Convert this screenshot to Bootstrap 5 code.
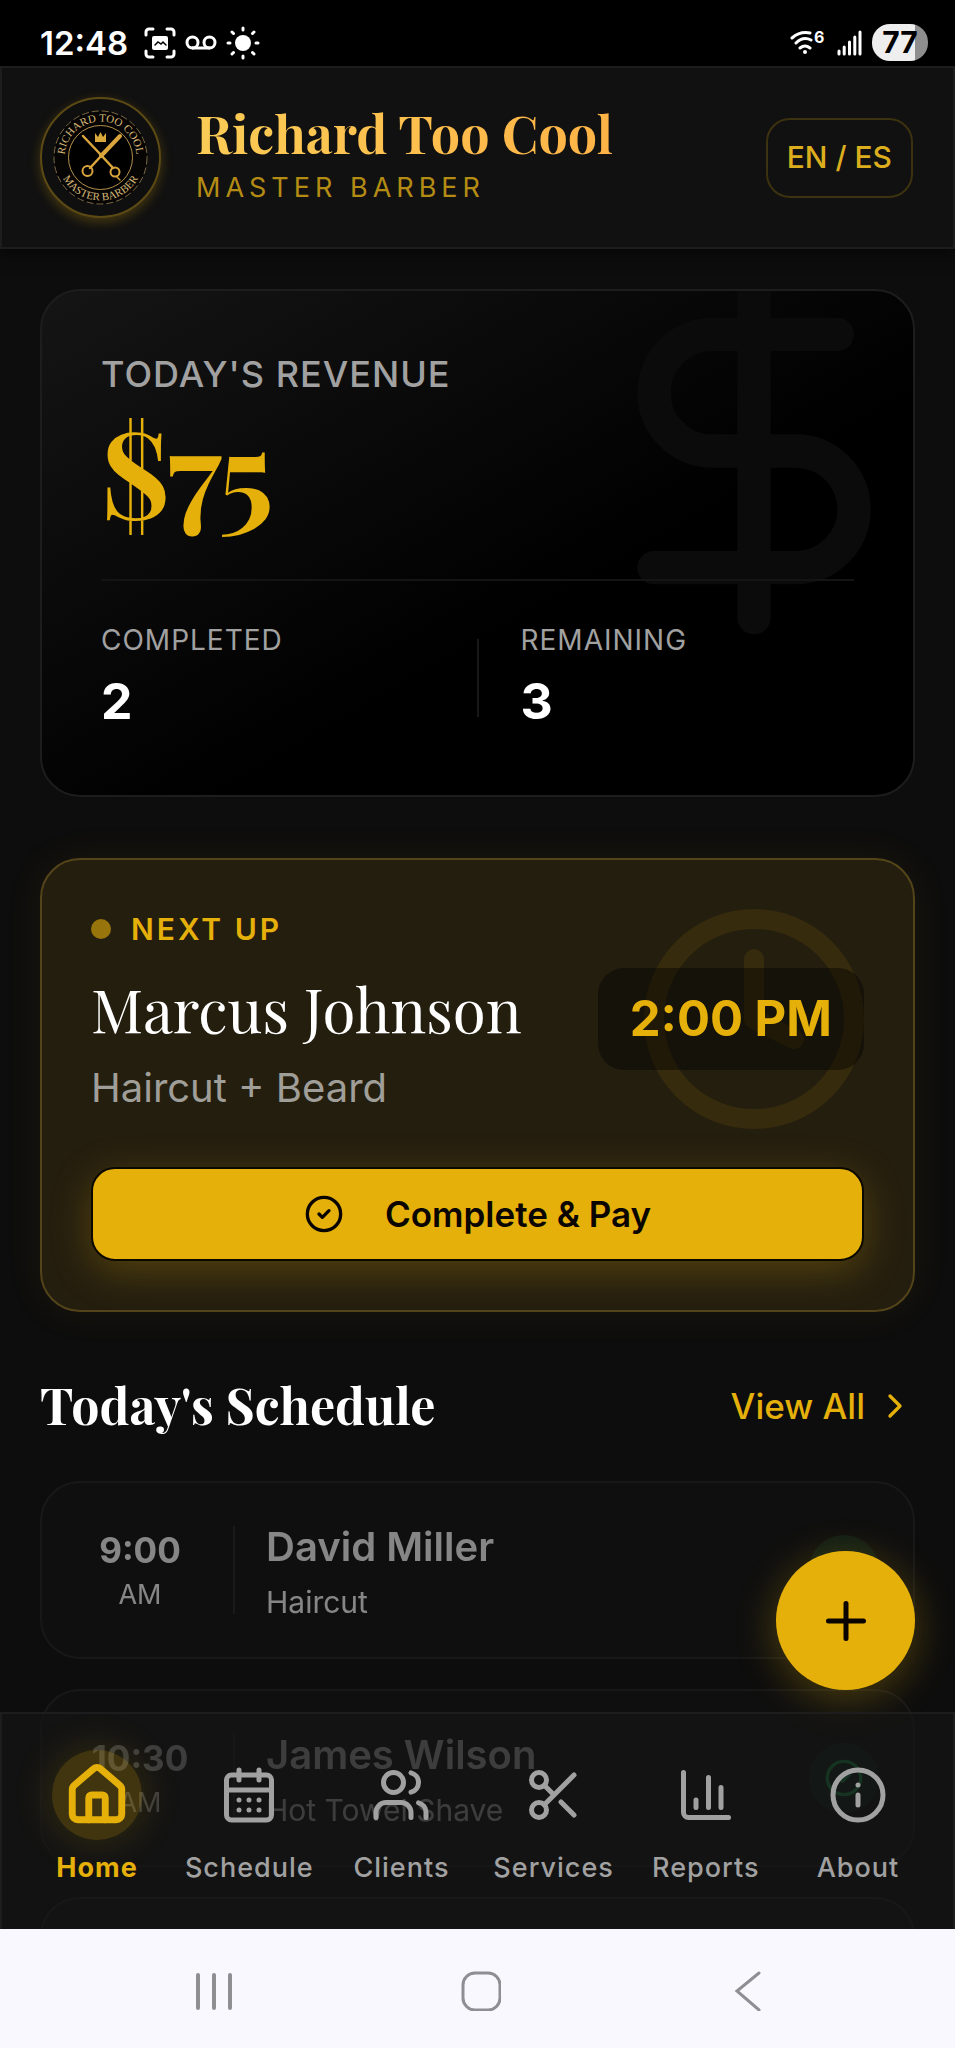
<!DOCTYPE html>
<html lang="en" data-bs-theme="dark">
<head>
<meta charset="utf-8">
<meta name="viewport" content="width=device-width, initial-scale=1">
<title>Richard Too Cool – Master Barber</title>
<link href="https://cdn.jsdelivr.net/npm/bootstrap@5.3.0/dist/css/bootstrap.min.css" rel="stylesheet">
<style>
:root{--gold:#e6b00a;--muted:#a1a1a1;--line:#1d1d1d;--serif:"Playfair Display","Liberation Serif",serif}
body{font-family:Inter,"Liberation Sans",sans-serif;background:#0d0d0d;color:#fff}
button{font-family:inherit}
.shell{height:100vh}
.gold{color:var(--gold)}
.muted{color:var(--muted)}
.serif{font-family:var(--serif)}
.stroke{fill:none;stroke:currentColor;stroke-width:2;stroke-linecap:round;stroke-linejoin:round}
/* phone status bar */
.statusbar{background:#000;height:66px;padding:19px 27px 0 40px;flex:none}
.clock{font-size:33px;line-height:40px;font-weight:600;margin-right:16px}
.status-icons{gap:9px}
.battery{width:56px;height:37px;border-radius:18px;background:linear-gradient(90deg,#eee 77%,#8e8e8e 77%);color:#000;font-size:30px;line-height:37px;font-weight:700}
/* header */
.topbar{background:#111;border:2px solid var(--line);padding:30px 40px 30px 38px;min-height:183px;box-shadow:0 4px 16px #0009;position:relative}
.logo{width:121px;height:121px;border-radius:50%;border:2px solid #5c4a14;background:#0f0f0f;box-shadow:0 4px 12px #e6b00a40;margin-right:35px}
.brand{font-size:52px;line-height:64px;font-weight:700;background:linear-gradient(90deg,#facc55,#ffb347);-webkit-background-clip:text;background-clip:text;color:transparent}
.tagline{font-size:27px;line-height:46px;letter-spacing:5px;color:#b48c14}
.btn-lang{border:2px solid #3d320f;border-radius:24px;height:80px;padding:0 19px;font-size:30px;font-weight:500;color:#dcae1e}
.btn-lang:hover{color:var(--gold);border-color:var(--gold)}
/* content */
.content{padding:40px 40px 0}
.panel{border:2px solid var(--line);border-radius:40px;position:relative;overflow:hidden}
.revenue{background:linear-gradient(150deg,#151515,#000 60%);padding:58px 59px 59px}
.watermark{position:absolute;top:-40px;right:-41px;color:#0b0b0b}
.label-lg{font-size:36px;line-height:50px;letter-spacing:1px;font-weight:500}
.amount{font-size:120px;line-height:120px;letter-spacing:-3px;font-weight:700;margin-top:10px}
.stats{position:relative;border-top:2px solid #141414;margin-top:50px;padding-top:39px;gap:42px}
.rule{width:2px;background:#181818;flex:none}
.stats .rule{height:78px}
.label-sm{font-size:28px;line-height:40px;letter-spacing:1px;color:var(--muted)}
.figure-num{font-size:50px;line-height:70px;font-weight:700;margin-top:6px}
.nextup{background:#241e0f;border-color:#54441a;padding:49px;margin-top:61px;box-shadow:0 0 40px #e6b00a12}
.clockmark{position:absolute;top:39px;right:39px;color:#372b0d}
.dot{width:20px;height:20px;border-radius:50%;background:#97740c}
.eyebrow{font-size:30px;line-height:40px;font-weight:600;letter-spacing:3px}
.next-row{margin-top:19px}
.client{font-size:60px;line-height:80px}
.service{font-size:40px;line-height:56px;margin-top:12px;color:#a09e98}
.timebox{position:relative;background:#00000066;border-radius:26px;padding:16px 32px;font-size:49px;line-height:70px;font-weight:700}
.btn-pay{position:relative;background:var(--gold);border:2px solid #0b0800;border-radius:24px;height:94px;margin-top:51px;font-size:35px;font-weight:600;color:#0a0500;gap:41px;box-shadow:0 10px 40px #e6b00a40}
.btn-pay:hover{background:#f0bd20;color:#000}
.section-head{margin-top:58px}
.section-title{font-size:50px;line-height:70px;font-weight:700}
.viewall{font-size:35px;line-height:72px;font-weight:500;gap:10px}
.appts{gap:30px;margin-top:39px}
.appt{background:#121212;border-color:#242424;padding:0 34px;height:178px;opacity:.5}
.appt-blank{background:#0f0f0f;border-color:#1d1d1d;opacity:1}
.appt .when{width:128px}
.appt .hour{font-size:35px;line-height:44px;font-weight:700}
.appt .half{font-size:27px;line-height:36px;margin-top:5px}
.appt .rule{height:88px;background:#282828;margin:0 31px 0 29px}
.appt .who{font-size:40px;line-height:54px;font-weight:600;margin-top:2px}
.appt .what{font-size:30px;line-height:40px;margin-top:8px}
.done{width:70px;height:70px;border-radius:50%;background:#22c55e26;color:#22c55e}
.fab{position:absolute;right:40px;bottom:239px;width:139px;height:139px;border-radius:50%;border:0;background:var(--gold);color:#0a0500;box-shadow:0 8px 40px #e6b00a4d}
/* tab bar */
.tabs{position:absolute;left:0;right:0;bottom:0;background:#161616a6;border:2px solid var(--line);border-bottom:0;padding:36px 19px 43px}
.tabs a{flex:1 1 0;min-width:0;font-size:27px;line-height:36px;font-weight:500;letter-spacing:1px;color:var(--muted);gap:10px}
.tabs .ico{width:90px;height:90px;border-radius:50%}
.tabs a.active{color:var(--gold);font-weight:700}
.tabs a.active .ico{background:#e6b00a38;box-shadow:0 0 40px #e6b00a2e}
.tabs a.active svg{stroke-width:2.5}
.sysnav{background:#f8f8fe;height:119px;padding:5px 73px 0 80px;flex:none}
.sysnav button{flex:1;border:0;background:none;color:#8e8e93}
</style>
</head>
<body>
<div class="shell d-flex flex-column overflow-hidden">

  <div class="statusbar d-flex align-items-center">
    <span class="clock">12:48</span>
    <div class="status-icons d-flex align-items-center">
      <svg width="32" height="32" viewBox="0 0 32 32" fill="none" stroke="#fff" stroke-width="3" stroke-linecap="round"><path d="M2 8V5a3 3 0 0 1 3-3h4M23 2h4a3 3 0 0 1 3 3v3M30 24v3a3 3 0 0 1-3 3h-4M9 30H5a3 3 0 0 1-3-3v-3"/><rect x="8" y="9" width="16" height="14" rx="2" fill="#fff" stroke="none"/><path d="m11 18 3-3 3 2 2-2 3 3" stroke="#000" stroke-width="1.5"/></svg>
      <svg width="32" height="16" viewBox="0 0 32 16" fill="none" stroke="#fff" stroke-width="3"><circle cx="7.500" cy="7.500" r="5.500"/><circle cx="24.500" cy="7.500" r="5.500"/><path d="M7 13h18"/></svg>
      <svg width="34" height="34" viewBox="0 0 34 34" fill="none" stroke="#fff" stroke-width="3" stroke-linecap="round"><circle cx="17" cy="17" r="8" fill="#fff" stroke="none"/><path d="M17 2v2M17 30v2M2 17h2M30 17h2M6 6l1.500 1.500M26.500 26.500 28 28M28 6l-1.500 1.500M7.500 26.500 6 28"/></svg>
    </div>
    <div class="status-icons d-flex align-items-center ms-auto">
      <svg width="38" height="34" viewBox="0 -6 38 34" fill="none" stroke="#fff" stroke-width="3" stroke-linecap="round"><path d="M2 6Q10-1 20 1M6 11q7-7 15-3M10 16q5-4 10 0"/><circle cx="15" cy="20" r="2" fill="#fff" stroke="none"/><text x="24" y="11" font-size="16" font-weight="700" fill="#fff" stroke="none">6</text></svg>
      <svg width="26" height="26" viewBox="0 0 26 26" stroke="#fff" stroke-width="3" stroke-linecap="round"><path d="M2 21v3M7.200 17v7M12.500 12v12M17.800 7v17M23 2v22"/></svg>
      <span class="battery text-center">77</span>
    </div>
  </div>

  <div class="flex-grow-1 position-relative overflow-hidden d-flex flex-column">
    <header class="topbar d-flex align-items-center z-1">
      <svg class="logo flex-shrink-0" viewBox="0 0 117 117" role="img" aria-label="Richard Too Cool Master Barber emblem">
        <defs><path id="arcTop" d="M22.500 58.500a36 36 0 0 1 72 0"/><path id="arcLow" d="M15.500 58.500a43 43 0 0 0 86 0"/></defs>
        <circle cx="58.500" cy="58.500" r="46.500" fill="#060504" stroke="#7d6b44" stroke-dasharray="7 3"/>
        <circle cx="58.500" cy="58.500" r="32" fill="#000" stroke="#b3924c"/>
        <g font-family="Liberation Serif" fill="#d6b878" text-anchor="middle">
          <text font-size="11"><textPath href="#arcTop" startOffset="50%">RICHARD TOO COOL</textPath></text>
          <text font-size="11"><textPath href="#arcLow" startOffset="50%">MASTER BARBER</textPath></text>
        </g>
        <path d="m53 34 3 4 2.500-5 2.500 5 3-4v9H53z" fill="#d9a93c"/>
        <g fill="none" stroke="#d9a53c" stroke-linecap="round"><path d="m41 37 19 20" stroke-width="2.500"/><path d="M78 37 59 57" stroke-width="4"/><path d="m58 55 13 14M60 56 48 69" stroke-width="2.500"/><circle cx="45.500" cy="72" r="5" stroke-width="2"/><circle cx="73" cy="73" r="4.500" stroke-width="2"/><path d="m75 78 3 3" stroke-width="1.500"/></g>
      </svg>
      <div class="pb-1">
        <h1 class="brand serif mb-0">Richard Too Cool</h1>
        <div class="tagline">MASTER BARBER</div>
      </div>
      <button type="button" class="btn btn-lang ms-auto">EN / ES</button>
    </header>

    <main class="content">
      <section class="panel revenue">
        <svg class="watermark stroke" width="400" height="400" viewBox="0 0 24 24" aria-hidden="true"><path d="M12 2v20M17 5H9.500a3.500 3.500 0 0 0 0 7h5a3.500 3.500 0 0 1 0 7H6"/></svg>
        <div class="position-relative">
          <div class="label-lg muted">TODAY'S REVENUE</div>
          <div class="amount serif gold">$75</div>
        </div>
        <div class="stats d-flex align-items-center">
          <div class="flex-fill w-50"><div class="label-sm">COMPLETED</div><div class="figure-num">2</div></div>
          <div class="rule"></div>
          <div class="flex-fill w-50"><div class="label-sm">REMAINING</div><div class="figure-num">3</div></div>
        </div>
      </section>

      <section class="panel nextup">
        <svg class="clockmark stroke" width="240" height="240" viewBox="0 0 24 24" aria-hidden="true"><circle cx="12" cy="12" r="10"/><path d="M12 6v6l4 2"/></svg>
        <div class="d-flex align-items-center gap-3">
          <span class="dot"></span><span class="eyebrow gold ms-1">NEXT UP</span>
        </div>
        <div class="next-row d-flex justify-content-between align-items-start">
          <div>
            <h2 class="client serif fw-normal mb-0">Marcus Johnson</h2>
            <div class="service">Haircut + Beard</div>
          </div>
          <div class="timebox gold">2:00 PM</div>
        </div>
        <button type="button" class="btn btn-pay w-100 d-flex align-items-center justify-content-center">
          <svg class="stroke" width="40" height="40" viewBox="0 0 24 24" aria-hidden="true"><circle cx="12" cy="12" r="10"/><path d="m9 12 2 2 4-4"/></svg>
          Complete &amp; Pay
        </button>
      </section>

      <div class="section-head d-flex justify-content-between align-items-start">
        <h2 class="section-title serif mb-0">Today's Schedule</h2>
        <a href="#" class="viewall gold d-flex align-items-center text-decoration-none">View All
          <svg class="stroke" width="40" height="40" viewBox="0 0 24 24" aria-hidden="true"><path d="m9 18 6-6-6-6"/></svg></a>
      </div>

      <div class="appts d-grid">
        <article class="panel appt d-flex align-items-center">
          <div class="when text-center"><div class="hour">9:00</div><div class="half">AM</div></div>
          <div class="rule"></div>
          <div class="flex-grow-1"><div class="who">David Miller</div><div class="what">Haircut</div></div>
          <div class="done d-flex align-items-center justify-content-center"><svg class="stroke" width="40" height="40" viewBox="0 0 24 24"><circle cx="12" cy="12" r="10"/><path d="m9 12 2 2 4-4"/></svg></div>
        </article>
        <article class="panel appt d-flex align-items-center">
          <div class="when text-center"><div class="hour">10:30</div><div class="half">AM</div></div>
          <div class="rule"></div>
          <div class="flex-grow-1"><div class="who">James Wilson</div><div class="what">Hot Towel Shave</div></div>
          <div class="done d-flex align-items-center justify-content-center"><svg class="stroke" width="40" height="40" viewBox="0 0 24 24"><circle cx="12" cy="12" r="10"/><path d="m9 12 2 2 4-4"/></svg></div>
        </article>
        <article class="panel appt appt-blank"></article>
      </div>
    </main>

    <button type="button" class="fab d-flex align-items-center justify-content-center" aria-label="Add appointment">
      <svg class="stroke" width="60" height="60" viewBox="0 0 24 24"><path d="M5 12h14M12 5v14"/></svg>
    </button>

    <nav class="tabs d-flex" aria-label="Main">
      <a href="#" class="active d-flex flex-column align-items-center text-decoration-none" aria-current="page"><span class="ico d-flex align-items-center justify-content-center"><svg class="stroke" width="66" height="66" viewBox="0 0 24 24"><path d="M15 21v-8a1 1 0 0 0-1-1h-4a1 1 0 0 0-1 1v8"/><path d="M3 10a2 2 0 0 1 .709-1.528l7-5.999a2 2 0 0 1 2.582 0l7 5.999A2 2 0 0 1 21 10v9a2 2 0 0 1-2 2H5a2 2 0 0 1-2-2z"/></svg></span>Home</a>
      <a href="#" class="d-flex flex-column align-items-center text-decoration-none"><span class="ico d-flex align-items-center justify-content-center"><svg class="stroke" width="60" height="60" viewBox="0 0 24 24"><path d="M8 2v4M16 2v4M3 10h18M8 14h.01M12 14h.01M16 14h.01M8 18h.01M12 18h.01M16 18h.01"/><rect x="3" y="4" width="18" height="18" rx="2"/></svg></span>Schedule</a>
      <a href="#" class="d-flex flex-column align-items-center text-decoration-none"><span class="ico d-flex align-items-center justify-content-center"><svg class="stroke" width="60" height="60" viewBox="0 0 24 24"><path d="M16 21v-2a4 4 0 0 0-4-4H6a4 4 0 0 0-4 4v2M22 21v-2a4 4 0 0 0-3-3.870M16 3.130a4 4 0 0 1 0 7.750"/><circle cx="9" cy="7" r="4"/></svg></span>Clients</a>
      <a href="#" class="d-flex flex-column align-items-center text-decoration-none"><span class="ico d-flex align-items-center justify-content-center"><svg class="stroke" width="60" height="60" viewBox="0 0 24 24"><circle cx="6" cy="6" r="3"/><circle cx="6" cy="18" r="3"/><path d="M8.120 8.120 12 12M20 4 8.120 15.880M14.800 14.800 20 20"/></svg></span>Services</a>
      <a href="#" class="d-flex flex-column align-items-center text-decoration-none"><span class="ico d-flex align-items-center justify-content-center"><svg class="stroke" width="60" height="60" viewBox="0 0 24 24"><path d="M3 3v16a2 2 0 0 0 2 2h16M18 17V9M13 17V5M8 17v-3"/></svg></span>Reports</a>
      <a href="#" class="d-flex flex-column align-items-center text-decoration-none"><span class="ico d-flex align-items-center justify-content-center"><svg class="stroke" width="60" height="60" viewBox="0 0 24 24"><circle cx="12" cy="12" r="10"/><path d="M12 16v-4M12 8h.01"/></svg></span>About</a>
    </nav>
  </div>

  <div class="sysnav d-flex align-items-center">
    <button type="button" aria-label="Recent apps"><svg width="40" height="40" viewBox="0 0 40 40" stroke="currentColor" stroke-width="4" stroke-linecap="round"><path d="M4 4v33M20 4v33M36 4v33"/></svg></button>
    <button type="button" aria-label="Home screen"><svg width="40" height="40" viewBox="0 0 40 40" fill="none" stroke="currentColor" stroke-width="3"><rect x="2" y="2" width="37" height="37" rx="12"/></svg></button>
    <button type="button" aria-label="Back"><svg width="40" height="40" viewBox="0 0 40 40" fill="none" stroke="currentColor" stroke-width="3" stroke-linecap="round"><path d="M31 2 9 20l22 19"/></svg></button>
  </div>
</div>
<script src="https://cdn.jsdelivr.net/npm/bootstrap@5.3.0/dist/js/bootstrap.bundle.min.js"></script>
</body>
</html>
